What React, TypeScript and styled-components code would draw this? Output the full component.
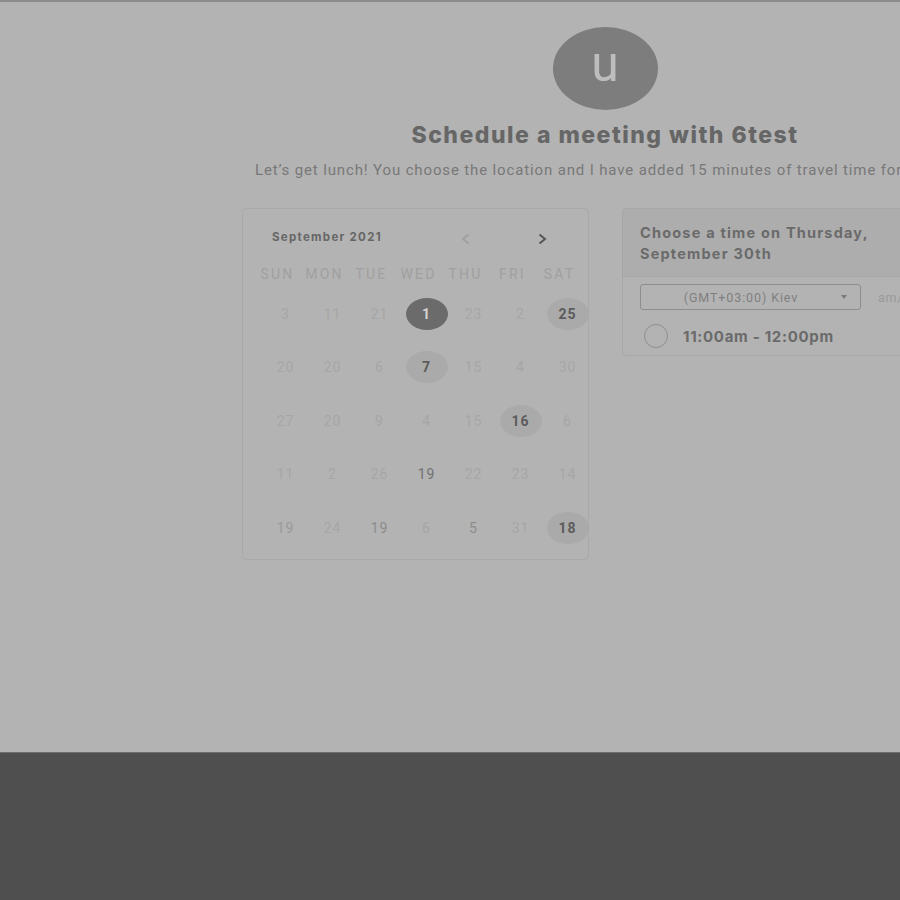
import React from "react";
import styled, { createGlobalStyle } from "styled-components";

const GlobalStyle = createGlobalStyle`
  html, body {
    margin: 0;
    padding: 0;
    background: #b3b3b3;
    overflow: hidden;
  }
  * { box-sizing: border-box; }
`;

const Page = styled.div`
  width: 1210px;
  height: 900px;
  display: flex;
  flex-direction: column;
  border-top: 2px solid #8c8c8c;
`;

const Main = styled.main`
  height: 750px;
  display: flex;
  flex-direction: column;
  align-items: center;
  padding-top: 25px;
`;

const Footer = styled.footer`
  flex: 1;
  background: #4f4f4f;
  border-top: 1px solid #6e6e6e;
`;

const Avatar = styled.div`
  width: 105px;
  height: 83px;
  border-radius: 50%;
  background: #7d7d7d;
  color: #bdbdbd;
  display: flex;
  align-items: center;
  justify-content: center;
  font-family: "Roboto", "Liberation Sans", sans-serif;
  font-size: 50px;
  line-height: 1;
  padding-bottom: 10px;
`;

const Title = styled.h1`
  margin: 11px 0 0;
  font-family: "Inter", "Liberation Sans", sans-serif;
  font-weight: 800;
  font-size: 23px;
  line-height: 28px;
  color: #666666;
  letter-spacing: 1.5px;
`;

const Description = styled.p`
  margin: 11px 0 0;
  width: 700px;
  font-family: "Roboto", "Liberation Sans", sans-serif;
  font-size: 15px;
  line-height: 20px;
  letter-spacing: 0.86px;
  color: #787878;
  white-space: nowrap;
`;

const Cards = styled.div`
  margin-top: 28px;
  display: flex;
  align-items: flex-start;
  gap: 33px;
`;

const Card = styled.section`
  width: 347px;
  border: 1px solid #a9a9a9;
  border-radius: 4px;
`;

const CalendarCard = styled(Card)`
  padding: 18px 0 4px;
`;

const NavRow = styled.div`
  height: 20px;
  display: flex;
  align-items: center;
  padding-left: 29px;
`;

const Month = styled.div`
  font-family: "Inter", "Liberation Sans", sans-serif;
  font-weight: 700;
  font-size: 11.5px;
  letter-spacing: 1.3px;
  color: #666666;
  width: 187px;
`;

const Arrow = styled.button<{ $active?: boolean }>`
  border: 0;
  background: none;
  padding: 0;
  width: 14px;
  height: 20px;
  margin-top: 4px;
  display: flex;
  align-items: center;
  justify-content: center;
  color: ${(p) => (p.$active ? "#555555" : "#a0a0a0")};
  & + & {
    margin-left: 62px;
  }
`;

const WeekRow = styled.div`
  margin-top: 17px;
  display: grid;
  grid-template-columns: repeat(7, 47px);
  padding-left: 10px;
  height: 20px;
  align-items: center;
`;

const WeekDay = styled.div`
  text-align: center;
  font-family: "Roboto", "Liberation Sans", sans-serif;
  font-size: 14px;
  letter-spacing: 2.2px;
  padding-left: 2px;
  color: #a0a0a0;
`;

const DayGrid = styled.div`
  margin-top: 3px;
  display: grid;
  grid-template-columns: repeat(7, 47px);
  grid-auto-rows: 53.5px;
  padding-left: 19px;
`;

type DayKind = "off" | "dim" | "mid" | "dark" | "avail" | "sel";

const DayCell = styled.div`
  display: flex;
  align-items: center;
  justify-content: center;
`;

const dayColor: Record<DayKind, string> = {
  off: "#a6a6a6",
  dim: "#999999",
  mid: "#8c8c8c",
  dark: "#717171",
  avail: "#5c5c5c",
  sel: "#d4d4d4",
};

const Day = styled.span<{ $kind: DayKind }>`
  width: 42px;
  height: 32px;
  border-radius: 50%;
  display: flex;
  align-items: center;
  justify-content: center;
  font-family: "Roboto", "Liberation Sans", sans-serif;
  font-size: 14px;
  font-weight: ${(p) => (p.$kind === "avail" || p.$kind === "sel" ? 700 : 400)};
  letter-spacing: 1px;
  color: ${(p) => dayColor[p.$kind]};
  background: ${(p) =>
    p.$kind === "sel" ? "#6b6b6b" : p.$kind === "avail" ? "#aaaaaa" : "transparent"};
`;

const TimeCard = styled(Card)`
  width: 346px;
  border-color: #a7a7a7;
  overflow: hidden;
`;

const TimeHeader = styled.div`
  background: #adadad;
  border-bottom: 1px solid #a6a6a6;
  padding: 13px 17px 12px;
  font-family: "Inter", "Liberation Sans", sans-serif;
  font-weight: 700;
  font-size: 14.5px;
  line-height: 21px;
  letter-spacing: 1.2px;
  color: #6a6a6a;
  white-space: nowrap;
`;

const TimeBody = styled.div`
  padding: 7px 0 7px 17px;
  display: flex;
  flex-direction: column;
  gap: 14px;
`;

const ZoneRow = styled.div`
  display: flex;
  align-items: center;
  gap: 17px;
`;

const Select = styled.div`
  width: 221px;
  height: 26px;
  flex: none;
  border: 1px solid #8e8e8e;
  border-radius: 3px;
  display: flex;
  align-items: center;
  padding-right: 13px;
  font-family: "Roboto", "Liberation Sans", sans-serif;
  font-size: 12.5px;
  letter-spacing: 0.9px;
  color: #7f7f7f;
`;

const SelectText = styled.span`
  flex: 1;
  text-align: center;
`;

const Caret = styled.span`
  width: 0;
  height: 0;
  border-left: 3.5px solid transparent;
  border-right: 3.5px solid transparent;
  border-top: 4px solid #7a7a7a;
`;

const Format = styled.span`
  font-family: "Roboto", "Liberation Sans", sans-serif;
  font-size: 12.5px;
  letter-spacing: 0.8px;
  color: #999999;
  white-space: nowrap;
`;

const SlotRow = styled.label`
  display: flex;
  align-items: center;
  gap: 15px;
  padding-left: 4px;
  height: 24px;
`;

const Radio = styled.span`
  width: 24px;
  height: 24px;
  border-radius: 50%;
  border: 1.5px solid #8f8f8f;
`;

const SlotText = styled.span`
  font-family: "Inter", "Liberation Sans", sans-serif;
  font-weight: 700;
  font-size: 15px;
  letter-spacing: 0.7px;
  color: #6a6a6a;
`;

const weekDays = ["SUN", "MON", "TUE", "WED", "THU", "FRI", "SAT"];

const days: [string, DayKind][][] = [
  [["3", "off"], ["11", "off"], ["21", "off"], ["1", "sel"], ["23", "off"], ["2", "off"], ["25", "avail"]],
  [["20", "off"], ["20", "off"], ["6", "off"], ["7", "avail"], ["15", "off"], ["4", "off"], ["30", "off"]],
  [["27", "off"], ["20", "off"], ["9", "off"], ["4", "off"], ["15", "off"], ["16", "avail"], ["6", "off"]],
  [["11", "off"], ["2", "off"], ["26", "off"], ["19", "dark"], ["22", "off"], ["23", "off"], ["14", "off"]],
  [["19", "dim"], ["24", "off"], ["19", "mid"], ["6", "off"], ["5", "mid"], ["31", "off"], ["18", "avail"]],
];

const Chevron = ({ dir }: { dir: "left" | "right" }) => (
  <svg width="12" height="12" viewBox="0 0 12 12" fill="none">
    <path
      d={dir === "left" ? "M8.5 1.5 L3 6 L8.5 10.5" : "M3.5 1.5 L9 6 L3.5 10.5"}
      stroke="currentColor"
      strokeWidth="2"
    />
  </svg>
);

export default function App() {
  return (
    <>
      <GlobalStyle />
      <Page>
        <Main>
          <Avatar>u</Avatar>
          <Title>Schedule a meeting with 6test</Title>
          <Description>
            Let’s get lunch! You choose the location and I have added 15 minutes of travel time for you.
          </Description>
          <Cards>
            <CalendarCard>
              <NavRow>
                <Month>September 2021</Month>
                <Arrow aria-label="Previous month">
                  <Chevron dir="left" />
                </Arrow>
                <Arrow $active aria-label="Next month">
                  <Chevron dir="right" />
                </Arrow>
              </NavRow>
              <WeekRow>
                {weekDays.map((d) => (
                  <WeekDay key={d}>{d}</WeekDay>
                ))}
              </WeekRow>
              <DayGrid>
                {days.flat().map(([n, k], i) => (
                  <DayCell key={i}>
                    <Day $kind={k}>{n}</Day>
                  </DayCell>
                ))}
              </DayGrid>
            </CalendarCard>
            <TimeCard>
              <TimeHeader>
                Choose a time on Thursday,
                <br />
                September 30th
              </TimeHeader>
              <TimeBody>
                <ZoneRow>
                  <Select>
                    <SelectText>(GMT+03:00) Kiev</SelectText>
                    <Caret />
                  </Select>
                  <Format>am/pm</Format>
                </ZoneRow>
                <SlotRow>
                  <Radio />
                  <SlotText>11:00am - 12:00pm</SlotText>
                </SlotRow>
              </TimeBody>
            </TimeCard>
          </Cards>
        </Main>
        <Footer />
      </Page>
    </>
  );
}
